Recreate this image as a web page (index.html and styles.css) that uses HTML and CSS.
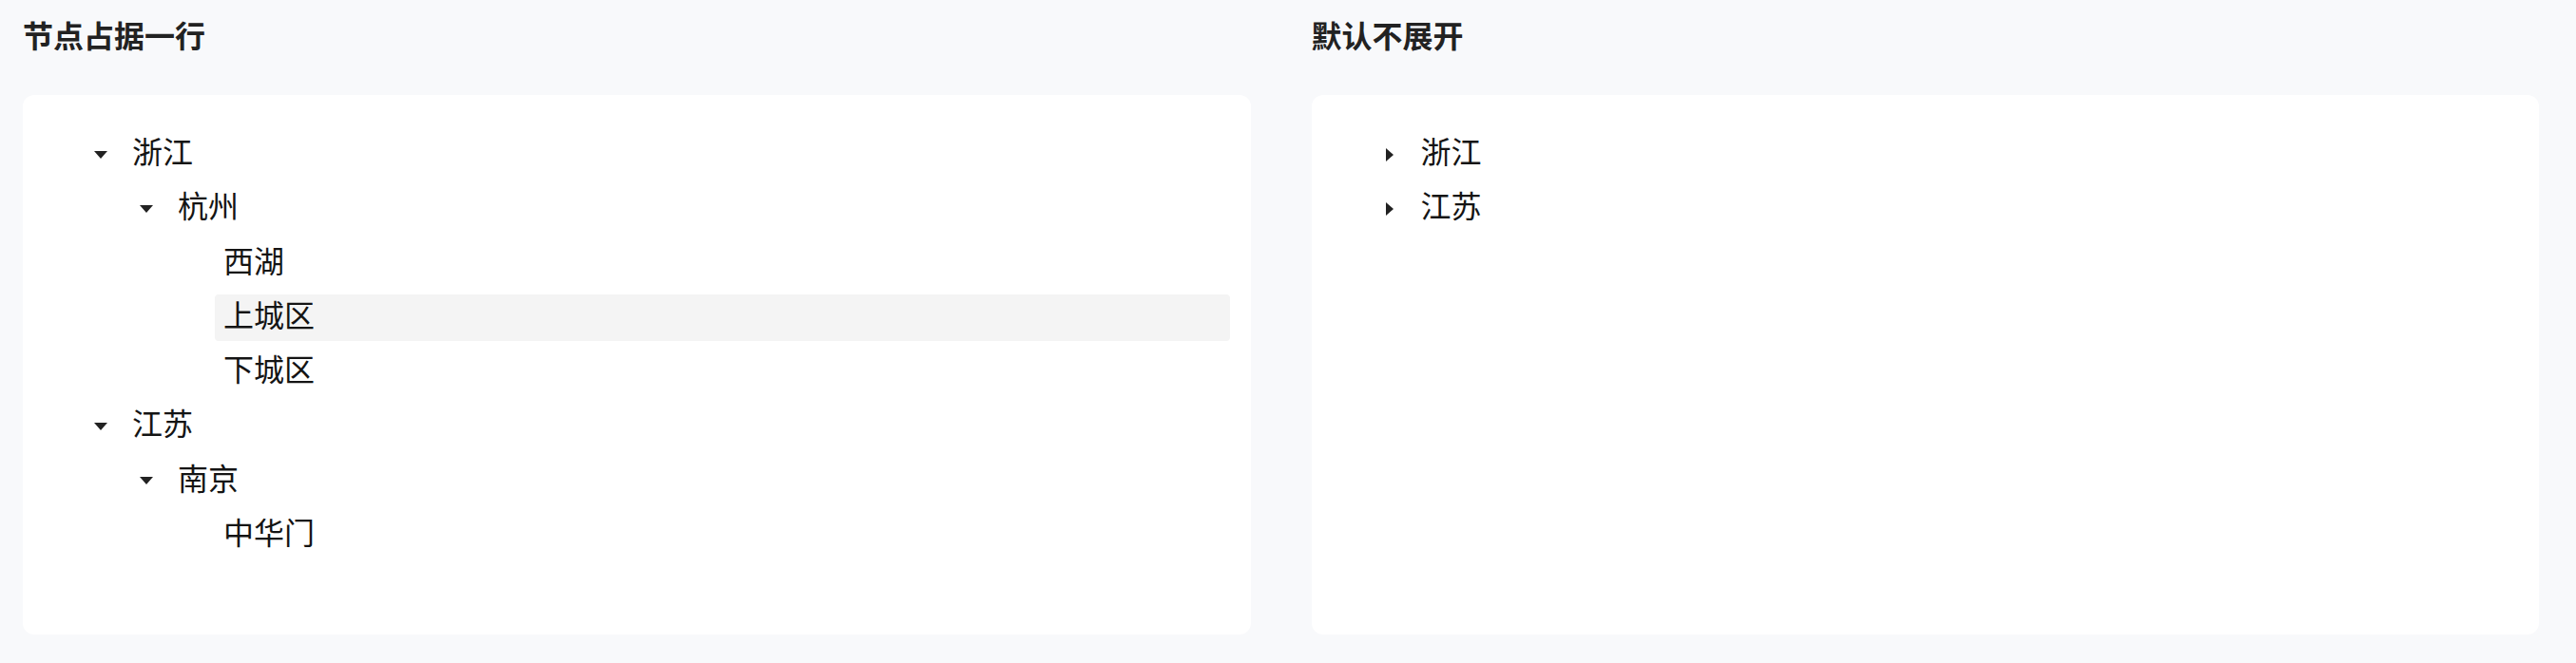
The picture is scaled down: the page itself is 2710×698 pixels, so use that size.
FILE: index.html
```html
<!DOCTYPE html>
<html>
<head>
  <title>Tree</title>
  <link rel="stylesheet" href="styles.css">
</head>
<body>
  <div class="demo-grid">
    <section class="demo">
      <h2>节点占据一行</h2>
      <div class="card">
        <ul class="tree">
          <li>
            <div class="node">
              <span class="switcher open"><svg viewBox="0 0 14 8" width="14" height="8"><polygon points="0,0 14,0 7,8"/></svg></span>
              <span class="title">浙江</span>
            </div>
            <ul>
              <li>
                <div class="node">
                  <span class="switcher open"><svg viewBox="0 0 14 8" width="14" height="8"><polygon points="0,0 14,0 7,8"/></svg></span>
                  <span class="title">杭州</span>
                </div>
                <ul>
                  <li><div class="node"><span class="switcher"></span><span class="title">西湖</span></div></li>
                  <li><div class="node"><span class="switcher"></span><span class="title hover">上城区</span></div></li>
                  <li><div class="node"><span class="switcher"></span><span class="title">下城区</span></div></li>
                </ul>
              </li>
            </ul>
          </li>
          <li>
            <div class="node">
              <span class="switcher open"><svg viewBox="0 0 14 8" width="14" height="8"><polygon points="0,0 14,0 7,8"/></svg></span>
              <span class="title">江苏</span>
            </div>
            <ul>
              <li>
                <div class="node">
                  <span class="switcher open"><svg viewBox="0 0 14 8" width="14" height="8"><polygon points="0,0 14,0 7,8"/></svg></span>
                  <span class="title">南京</span>
                </div>
                <ul>
                  <li><div class="node"><span class="switcher"></span><span class="title">中华门</span></div></li>
                </ul>
              </li>
            </ul>
          </li>
        </ul>
      </div>
    </section>

    <section class="demo">
      <h2>默认不展开</h2>
      <div class="card">
        <ul class="tree">
          <li>
            <div class="node">
              <span class="switcher"><svg viewBox="0 0 8 14" width="8" height="14"><polygon points="0,0 8,7 0,14"/></svg></span>
              <span class="title inline">浙江</span>
            </div>
          </li>
          <li>
            <div class="node">
              <span class="switcher"><svg viewBox="0 0 8 14" width="8" height="14"><polygon points="0,0 8,7 0,14"/></svg></span>
              <span class="title inline">江苏</span>
            </div>
          </li>
        </ul>
      </div>
    </section>
  </div>
</body>
</html>
```

FILE: styles.css
```css
body {
  margin: 0;
  padding: 13px 39px 0 24px;
  background-color: #f8f9fb;
  font-family: "Noto Sans CJK SC", "Noto Sans", sans-serif;
  color: #141414;
}

.demo-grid {
  display: grid;
  grid-template-columns: 1fr 1fr;
  column-gap: 64px;
}

.demo {
  display: flex;
  flex-direction: column;
}

.demo h2 {
  margin: 0 0 41px;
  font-size: 32px;
  line-height: 46px;
  font-weight: 700;
  color: #222;
}

.card {
  flex: 1;
  background: #fff;
  border-radius: 12px;
  padding: 38px 22px 72px 22px;
}

.tree,
.tree ul {
  list-style: none;
  margin: 0;
  padding: 0;
}

.tree {
  padding-left: 36px;
}

.tree ul {
  padding-left: 48px;
}

.node {
  display: flex;
  align-items: center;
  height: 49.3px;
  margin-bottom: 8px;
}

.switcher {
  flex: none;
  width: 48px;
  height: 49px;
  display: flex;
  align-items: center;
  justify-content: center;
}

.switcher svg {
  fill: #222;
}

/* text sits a little above the middle of the row */
.title {
  flex: 1;
  box-sizing: border-box;
  height: 100%;
  padding: 0 0 8px 9px;
  font-size: 32px;
  line-height: 41px;
  border-radius: 4px;
}

.title.hover {
  background: #f4f4f4;
}
```
